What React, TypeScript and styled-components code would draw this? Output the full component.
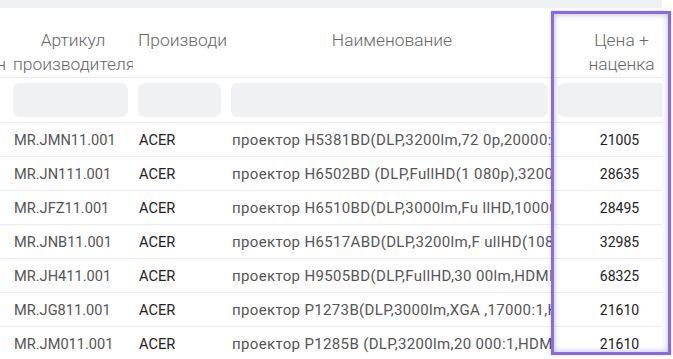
import React from "react";
import styled, { createGlobalStyle } from "styled-components";

const Global = createGlobalStyle`
  html, body { margin: 0; padding: 0; background: #ffffff; }
  body { font-family: Roboto, "Noto Sans", Arial, sans-serif; }
  * { box-sizing: border-box; }
`;

const Page = styled.div`
  position: relative;
  width: 673px;
  height: 359px;
  overflow: hidden;
  background: #ffffff;
`;

const TopBar = styled.div`
  width: 662px;
  height: 8px;
  background: #eff0f2;
`;

const Viewport = styled.div`
  width: 662px;
  overflow: hidden;
`;

const COLS = "8px 125px 93px 327px 132px";

const Row = styled.div<{ $h?: number }>`
  display: grid;
  grid-template-columns: ${COLS};
  width: 685px;
  border-bottom: 1px solid #ececec;
  ${(p) => (p.$h ? `height: ${p.$h}px;` : "")}
`;

const HeadCell = styled.div<{ $end?: boolean }>`
  overflow: hidden;
  padding: 20px 0 1px 5px;
  font-size: 17.4px;
  font-weight: 300;
  line-height: 24px;
  color: #666666;
  text-align: center;
  white-space: pre-line;
  ${(p) =>
    p.$end
      ? `display: flex; justify-content: flex-end; padding: 20px 2px 1px 0; white-space: pre;`
      : ""}
`;

const HeadLabel = styled.span`
  display: block;
  text-align: center;
  white-space: pre;
`;

const FilterCell = styled.div`
  padding: 5px;
  overflow: hidden;
`;

const FilterBox = styled.div`
  height: 34px;
  border-radius: 7px;
  background: #f0f1f3;
`;

const Cell = styled.div<{
  $tone?: "dark" | "mid";
  $center?: boolean;
  $size?: number;
  $spacing?: number;
}>`
  display: flex;
  align-items: center;
  justify-content: ${(p) => (p.$center ? "center" : "flex-start")};
  padding: 0 5px 0 6px;
  overflow: hidden;
  white-space: nowrap;
  font-size: ${(p) => p.$size ?? 14}px;
  letter-spacing: ${(p) => p.$spacing ?? 0}px;
  color: ${(p) => (p.$tone === "dark" ? "#222222" : "#555555")};
`;

const Highlight = styled.div`
  position: absolute;
  left: 551px;
  top: 11px;
  width: 120px;
  height: 344px;
  border: 3px solid #8a66f4;
  box-shadow: inset 0 0 6px rgba(0, 0, 0, 0.28), 0 0 3px rgba(0, 0, 0, 0.15);
  pointer-events: none;
`;

const rows = [
  ["MR.JMN11.001", "ACER", "проектор H5381BD(DLP,3200lm,72 0p,20000:1,HDMI)", "21005"],
  ["MR.JN111.001", "ACER", "проектор H6502BD (DLP,FullHD(1 080p),3200lm,HDMI)", "28635"],
  ["MR.JFZ11.001", "ACER", "проектор H6510BD(DLP,3000lm,Fu llHD,10000:1,HDMI)", "28495"],
  ["MR.JNB11.001", "ACER", "проектор H6517ABD(DLP,3200lm,F ullHD(1080p),HDMI)", "32985"],
  ["MR.JH411.001", "ACER", "проектор H9505BD(DLP,FullHD,30 00lm,HDMI,3D)", "68325"],
  ["MR.JG811.001", "ACER", "проектор P1273B(DLP,3000lm,XGA ,17000:1,HDMI)", "21610"],
  ["MR.JM011.001", "ACER", "проектор P1285B (DLP,3200lm,20 000:1,HDMI,XGA)", "21610"],
];

export default function App() {
  return (
    <Page>
      <Global />
      <TopBar />
      <Viewport>
        <Row>
          <HeadCell $end>
            <HeadLabel>{"Срок\nпоставки, дн"}</HeadLabel>
          </HeadCell>
          <HeadCell>Артикул производителя</HeadCell>
          <HeadCell>Производитель</HeadCell>
          <HeadCell>Наименование</HeadCell>
          <HeadCell>{"Цена +\nнаценка"}</HeadCell>
        </Row>
        <Row>
          <FilterCell />
          <FilterCell>
            <FilterBox />
          </FilterCell>
          <FilterCell>
            <FilterBox />
          </FilterCell>
          <FilterCell>
            <FilterBox />
          </FilterCell>
          <FilterCell>
            <FilterBox />
          </FilterCell>
        </Row>
        {rows.map((r, i) => (
          <Row key={i} $h={34}>
            <Cell />
            <Cell $size={14.6}>{r[0]}</Cell>
            <Cell $tone="dark" $size={14.6}>
              {r[1]}
            </Cell>
            <Cell $size={15} $spacing={0.35}>
              {r[2]}
            </Cell>
            <Cell $tone="dark" $center>
              {r[3]}
            </Cell>
          </Row>
        ))}
      </Viewport>
      <Highlight />
    </Page>
  );
}
